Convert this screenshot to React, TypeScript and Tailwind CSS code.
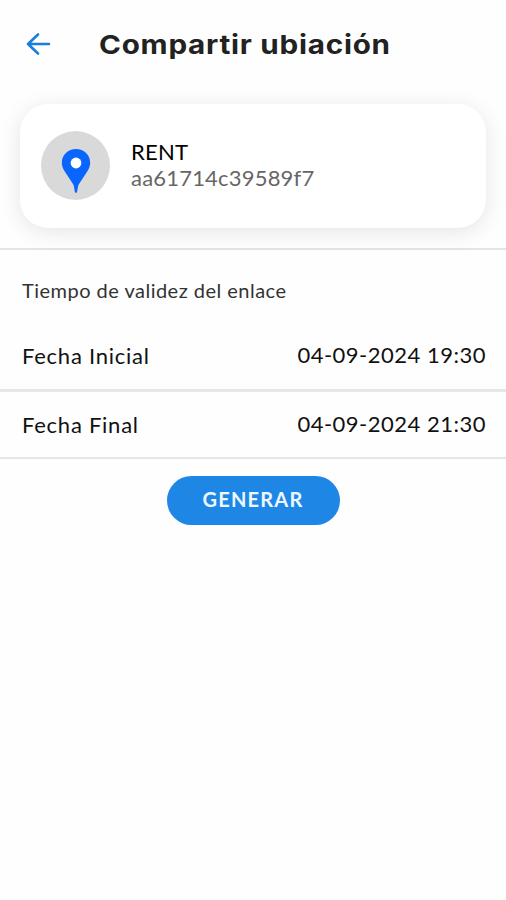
const dates = [
  { label: "Fecha Inicial", value: "04-09-2024 19:30", row: "h-[69px] border-b-3" },
  { label: "Fecha Final", value: "04-09-2024 21:30", row: "h-[67px] border-b-2" },
];

export default function App() {
  return (
    <div className="min-h-screen bg-[#fefefe] font-['Lato',sans-serif] text-black">
      {/* Header */}
      <header className="flex h-[88px] items-center pl-[26px]">
        <button aria-label="Volver" className="mr-[48px]">
          <BackIcon />
        </button>
        <h1 className="origin-left scale-x-[1.14] pt-px font-['Inter',sans-serif] text-[26px] leading-8 font-bold tracking-[0.65px] whitespace-nowrap text-[#222]">
          Compartir ubiación
        </h1>
      </header>

      {/* Device card */}
      <section className="border-b-2 border-[#e4e4e4] px-[20px] pt-4 pb-5">
        <div className="flex h-[124px] items-center rounded-[28px] bg-white pb-[2px] pl-[21px] shadow-[0_4px_22px_rgba(0,0,0,0.1)]">
          <div className="flex size-[69px] items-center justify-center rounded-full bg-[#d9d9d9]">
            <PinIcon />
          </div>
          <div className="ml-[21px] text-[22px] leading-[26px]">
            <p className="tracking-[0.2px]">RENT</p>
            <p className="tracking-[0.2px] text-[#666]">aa61714c39589f7</p>
          </div>
        </div>
      </section>

      {/* Link validity */}
      <h2 className="h-[73px] pt-[26px] pl-[22px] text-[20px] leading-7 tracking-[0.48px] text-[#333]">
        Tiempo de validez del enlace
      </h2>
      {dates.map((d) => (
        <div
          key={d.label}
          className={`flex items-center justify-between border-[#e6e6e6] pr-[20px] pl-[22px] text-[22px] ${d.row}`}
        >
          <span className="pb-px tracking-[0.75px] text-[#111]">{d.label}</span>
          <span className="pb-[3px] tracking-[0.5px] text-[#111]">{d.value}</span>
        </div>
      ))}

      <div className="flex justify-center pt-[17px]">
        <button className="h-[49px] w-[173px] rounded-full bg-[#1e87e5] pb-[3px] text-[20px] font-bold tracking-[1.2px] text-[#eef7ff]">
          GENERAR
        </button>
      </div>
    </div>
  );
}

/* Icons */
function BackIcon() {
  return (
    <svg
      width="25"
      height="24"
      viewBox="0 0 25 24"
      fill="none"
      stroke="#1780df"
      strokeWidth={2.6}
      strokeLinecap="round"
      strokeLinejoin="round"
    >
      <path d="M23 12H2M12 2.500L2 12l10 9.500" />
    </svg>
  );
}

function PinIcon() {
  return (
    <svg width="30" height="46" viewBox="0 0 30 46" className="mt-[12px]">
      <path
        fill="#0866ff"
        d="M15 1C7 1 .8 7 .8 14.800c0 3.200 1.200 6 3 8.700L12.300 36.500c1.300 2.500 1 8.500 2.700 8.500s1.400-6 2.700-8.500L26.200 23.500c1.800-2.700 3-5.500 3-8.700C29.200 7 23 1 15 1z"
      />
      <circle cx="15" cy="15" r="5.400" fill="#fff" />
    </svg>
  );
}
